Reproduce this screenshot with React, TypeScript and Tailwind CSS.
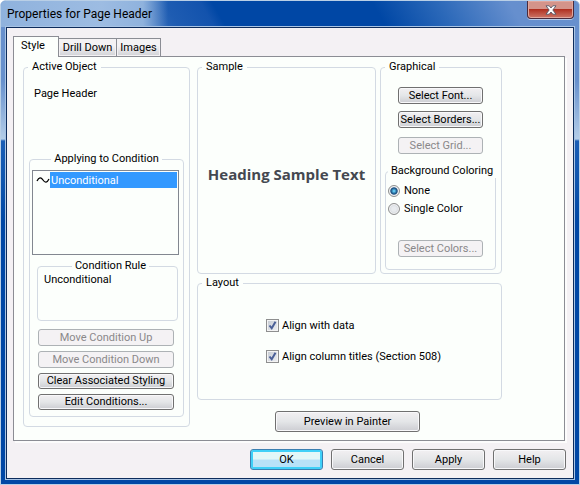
import type { ButtonHTMLAttributes, ReactNode } from 'react';
import clsx from 'clsx';

function Group({ title, centered, className, children }: {
  title: string;
  centered?: boolean;
  className?: string;
  children?: ReactNode;
}) {
  return (
    <fieldset className={clsx('min-w-0 rounded border border-[#d3dae3]', className)}>
      <legend className={clsx('whitespace-nowrap', centered ? 'mx-auto px-[3px]' : 'ml-1 px-1')}>{title}</legend>
      {children}
    </fieldset>
  );
}

function Button({ primary, className, ...props }: ButtonHTMLAttributes<HTMLButtonElement> & { primary?: boolean }) {
  return (
    <button
      type="button"
      className={clsx(
        'flex shrink-0 items-center justify-center overflow-hidden rounded-[3px] border whitespace-nowrap',
        primary
          ? 'border-[#3c7fb1] bg-linear-to-b from-[#e2f7f8] from-45% to-[#b8e2f8] to-55% shadow-[inset_0_0_0_2px_#3fd0f8]'
          : 'border-[#707070] bg-linear-to-b from-[#f2f0f2] from-0% via-[#e4e6e8] via-50% to-[#cccdd2] shadow-[inset_0_0_0_1px_#f8f8fa]',
        'disabled:border-[#adb2b5] disabled:bg-[#f4f2f4] disabled:bg-none disabled:text-[#8a888a] disabled:shadow-none',
        className,
      )}
      {...props}
    />
  );
}

function Tab({ label, className }: { label: string; className: string }) {
  return (
    <button
      type="button"
      role="tab"
      aria-selected="false"
      className={clsx(
        'h-[18px] border border-b-0 border-l-0 border-[#8b8d94] bg-linear-to-b from-[#f4f2f4] from-40% to-[#d0d2d6] whitespace-nowrap shadow-[inset_0_0_0_1px_#f4f2f4]',
        className,
      )}
    >
      {label}
    </button>
  );
}

function Radio({ label, checked }: { label: string; checked?: boolean }) {
  return (
    <label className="flex h-[18px] items-center gap-1">
      <input
        type="radio"
        name="background"
        defaultChecked={checked}
        className="size-3 appearance-none rounded-full border border-[#8e8f8f] bg-radial from-[#e8ebee] from-30% to-[#c4c9ce] shadow-[inset_0_0_0_1px_#f4f4f4] checked:from-[#5fc4ee] checked:from-10% checked:via-[#14497a] checked:via-45% checked:to-[#dfe3e6] checked:to-60%"
      />
      {label}
    </label>
  );
}

function Check({ label }: { label: string }) {
  return (
    <label className="flex h-[13px] items-center gap-[3px]">
      <span className="grid size-[13px] shrink-0">
        <input
          type="checkbox"
          defaultChecked
          className="peer col-start-1 row-start-1 size-[13px] appearance-none border border-[#8e8f8f] bg-linear-to-br from-[#c4cad2] to-[#eff1f4] shadow-[inset_0_0_0_1px_#f4f4f4]"
        />
        <svg viewBox="0 0 13 13" className="pointer-events-none col-start-1 row-start-1 hidden size-[13px] peer-checked:block" fill="none" stroke="#4a5f97" strokeWidth="2">
          <path d="M3.5 6.5 L5.7 9.3 L9.5 2.8" />
        </svg>
      </span>
      {label}
    </label>
  );
}

export default function App() {
  return (
    <div className="flex min-h-screen flex-col overflow-hidden rounded-t-md border border-[#b9cfe6] bg-[#0047a5] bg-[linear-gradient(180deg,#6790cd_0px,#6790cd_80px,#b4cde8_138px,#1a5db5_140px,#0f55ae_180px,#0047a5_220px)] px-[5px] pb-[5px] font-['Roboto','Liberation_Sans',sans-serif] text-[11px] leading-[14px] text-black">
      {/* Title bar */}
      <header className="-mx-[5px] flex h-[26px] shrink-0 items-start justify-between bg-[linear-gradient(60deg,#7fa6d8_0%,#7fa6d8_8%,#1e5cb2_30%,#1353ad_36%,#0047a5_38%,#0047a5_65%,#2c69b9_76%,#668fce_88%,#6790cd_100%)] pr-[5px]">
        <h1 className="flex h-[26px] items-center bg-[linear-gradient(90deg,#8fb2dd_0%,#9dbce2_60%,#8fb2dd_85%,transparent_100%)] pr-4 pl-1.5 font-['Roboto',sans-serif] text-xs">
          Properties for Page Header
        </h1>
        <button
          type="button"
          aria-label="Close"
          className="flex h-[18px] w-[47px] items-center justify-center rounded-b border border-t-0 border-[#4a2b3c] bg-linear-to-b from-[#d4948a] from-45% via-[#b03020] via-50% to-[#cc7466] shadow-[inset_0_0_0_1px_#e0a79d,0_1px_0_#b4cbe8]"
        >
          <svg viewBox="0 0 12 10" className="h-2.5 w-3">
            <path d="M1 .8H4.2L6 3 7.8.8H11L7.8 5 11 9.2H7.8L6 7 4.2 9.2H1L4.2 5Z" fill="#fff" stroke="#535666" strokeWidth=".9" />
          </svg>
        </button>
      </header>

      <main className="flex flex-1 flex-col border border-[#0d2c5c] bg-[#f4f1f4] px-1.5 pt-2 pb-2 outline outline-[#a9c4e4]">
        {/* Tabs */}
        <div role="tablist" className="flex items-end">
          <button type="button" role="tab" aria-selected="true" className="z-10 -mb-px h-[21px] w-[46px] border border-b-0 border-[#8b8d94] bg-[#fcfffc] pr-1.5 pb-0.5">Style</button>
          <Tab label="Drill Down" className="w-[58px]" />
          <Tab label="Images" className="w-11" />
        </div>

        <section className="mr-0.5 flex flex-1 gap-[7px] border border-[#8b8d94] bg-[#fcfffc] pt-[3px] pr-[62px] pl-[9px] shadow-[2px_2px_0_#fcfcfc]">
          <Group title="Active Object" className="mb-[13px] flex w-[167px] shrink-0 flex-col pb-[9px]">
            <p className="mt-[13px] ml-2.5">Page Header</p>
            <Group title="Applying to Condition" centered className="mx-[5px] mt-[51px] flex-1 px-0.5 pb-1.5">
              <ul role="listbox" aria-label="Applying to Condition" className="mt-1 mr-0.5 h-[85px] border border-[#828790] bg-[#fcfffc] p-px">
                <li role="option" aria-selected="true" className="flex h-4 items-center pl-0.5">
                  <svg viewBox="0 0 14 8" className="h-2 w-3.5 shrink-0" fill="none" stroke="#000" strokeWidth="1.3">
                    <path d="M1 5 C3 1 5 1 7 4 S11 7 13 3" />
                  </svg>
                  <span className="h-4 flex-1 bg-[#3399ff] pl-px leading-[17px] text-white">Unconditional</span>
                </li>
              </ul>
              <Group title="Condition Rule" centered className="mt-1 mr-[3px] ml-[5px] h-[62px] pl-1.5">
                <p>Unconditional</p>
              </Group>
              <div className="mt-2 mr-[7px] ml-1.5 flex flex-col gap-[5px]">
                <Button disabled className="h-[17px]">Move Condition Up</Button>
                <Button disabled className="h-[17px]">Move Condition Down</Button>
                <Button className="h-4">Clear Associated Styling</Button>
                <Button className="h-4">Edit Conditions...</Button>
              </div>
            </Group>
          </Group>

          <div className="flex min-w-0 flex-1 flex-col">
            <div className="flex gap-1">
              <Group title="Sample" className="flex h-[214px] flex-1 items-center justify-center">
                <p className="font-['Open_Sans',sans-serif] text-[15px] font-bold whitespace-nowrap text-[#444850]">Heading Sample Text</p>
              </Group>
              <Group title="Graphical" className="flex h-[214px] w-[122px] shrink-0 flex-col">
                <div className="mt-[13px] mr-[18px] ml-[17px] flex flex-col">
                  <Button className="h-[17px]">Select Font...</Button>
                  <Button className="mt-[7px] h-[17px]">Select Borders...</Button>
                  <Button disabled className="mt-[9px] h-[17px]">Select Grid...</Button>
                </div>
                <Group title="Background Coloring" centered className="mt-2.5 mr-[5px] ml-1 h-[106px] px-0.5">
                  <div className="mt-1">
                    <Radio label="None" checked />
                    <Radio label="Single Color" />
                  </div>
                  <Button disabled className="mt-[22px] ml-2.5 h-[17px] w-[85px]">Select Colors...</Button>
                </Group>
              </Group>
            </div>
            <Group title="Layout" className="mt-0.5 h-[124px]">
              <div className="mt-[29px] ml-[68px] flex flex-col gap-[18px]">
                <Check label="Align with data" />
                <Check label="Align column titles (Section 508)" />
              </div>
            </Group>
            <Button className="mt-[11px] ml-[78px] h-[21px] w-[145px]">Preview in Painter</Button>
          </div>
        </section>

        <footer className="mt-2 mr-px flex justify-end gap-2">
          <Button primary className="h-[21px] w-[73px]">OK</Button>
          <Button className="h-[21px] w-[73px]">Cancel</Button>
          <Button className="h-[21px] w-[73px]">Apply</Button>
          <Button className="h-[21px] w-[73px]">Help</Button>
        </footer>
      </main>
    </div>
  );
}
